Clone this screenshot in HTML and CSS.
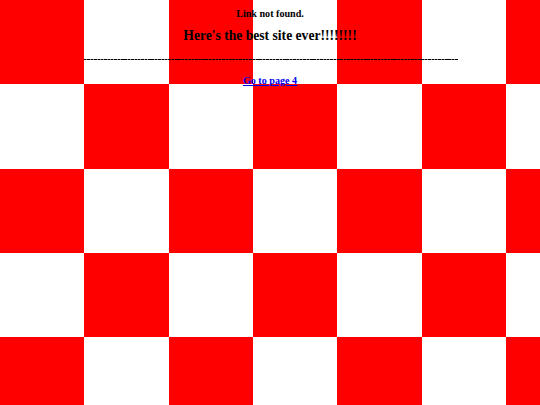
FILE: index.html
```html
<!DOCTYPE html>
<html>
<head>
<meta charset="utf-8">
<title>Link not found</title>
<link rel="stylesheet" href="styles.css">
</head>
<body>
<div class="page">
  <div class="msg">Link not found.</div>
  <h1 class="title">Here's the best site ever!!!!!!!!</h1>
  <div class="rule"></div>
  <a class="next" href="#">Go to page 4</a>
</div>
</body>
</html>
```
FILE: styles.css
```css
html {
  margin: 0;
  padding: 0;
  width: 540px;
  height: 405px;
  overflow: hidden;
  background: repeating-linear-gradient(90deg, #ff0000 0 84.375px, #ffffff 84.375px 168.75px);
}
body {
  margin: 0;
  padding: 0;
  width: 540px;
  height: 405px;
  position: relative;
  font-family: "Liberation Serif", "Times New Roman", serif;
  color: #000;
}
body::before {
  content: "";
  position: absolute;
  inset: 0;
  z-index: -1;
  background: repeating-linear-gradient(90deg, #ffffff 0 84.375px, #ff0000 84.375px 168.75px);
  -webkit-mask-image: repeating-linear-gradient(180deg, transparent 0 84.375px, #000 84.375px 168.75px);
  mask-image: repeating-linear-gradient(180deg, transparent 0 84.375px, #000 84.375px 168.75px);
}
.page {
  display: flex;
  flex-direction: column;
  align-items: center;
  padding-top: 8px;
}
.msg {
  font-size: 10.125px;
  line-height: 12px;
  font-weight: bold;
}
.title {
  margin: 8px 0 0;
  font-size: 13.6px;
  line-height: 16px;
  font-weight: bold;
}
.rule {
  margin-top: 15px;
  width: 374px;
  height: 1px;
  margin-left: 1px;
  background: repeating-linear-gradient(90deg, #000 0 2.4px, rgba(0,0,0,0.45) 2.4px 3.375px);
}
.next {
  margin-top: 14.6px;
  font-size: 10.125px;
  line-height: 12px;
  font-weight: bold;
  color: #0000ee;
  text-decoration: underline;
}
```
